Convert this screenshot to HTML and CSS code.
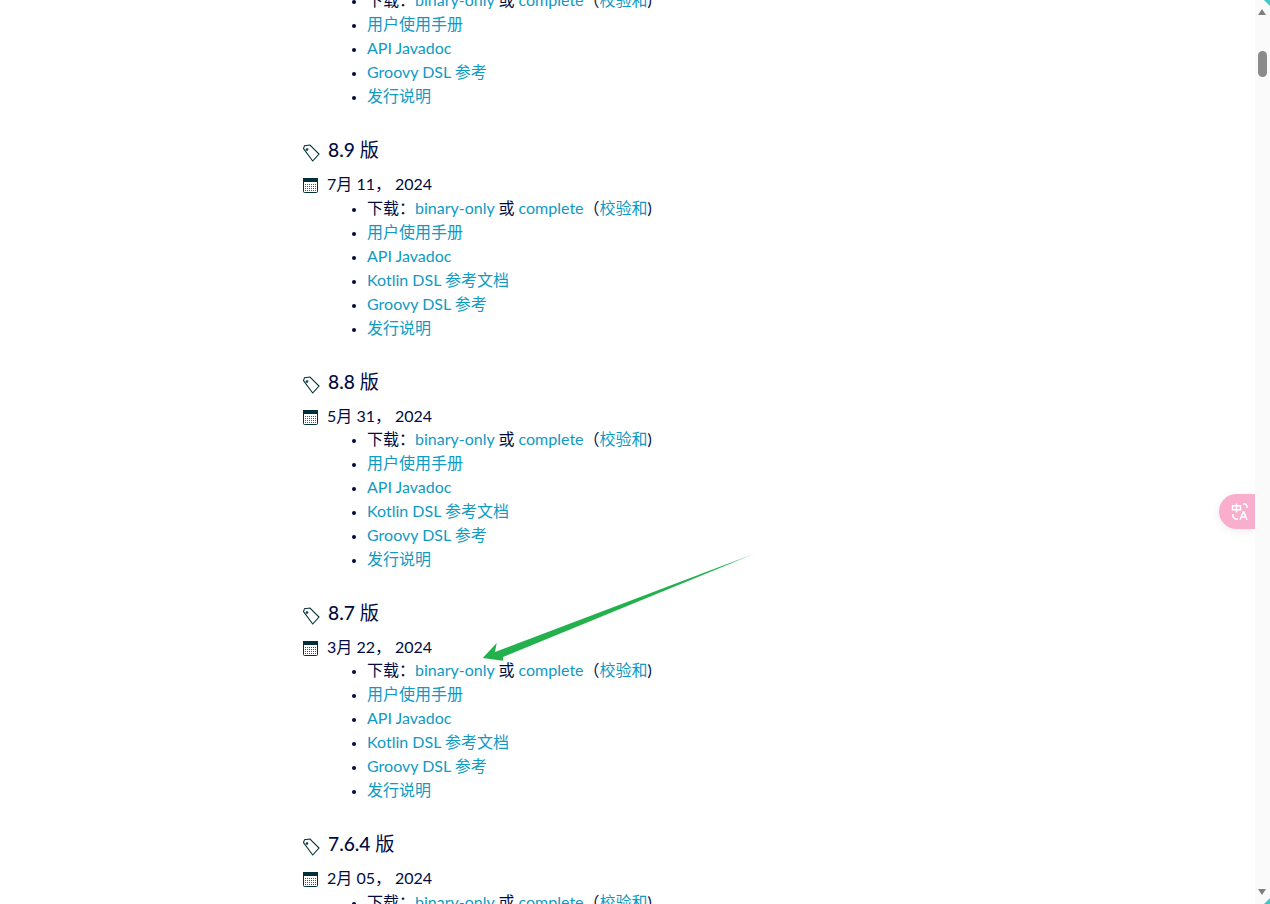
FILE: index.html
```html
<!DOCTYPE html>
<html lang="zh-CN">
  <head>
    <meta http-equiv="Content-Type" content="text/html;charset=UTF-8" />
    <title>Gradle 发行版</title>
    <link rel="stylesheet" href="styles.css">
  </head>
  <body>
    <main class="releases">
      <section class="release release-first">
        <ul class="links">
          <li>下载：<a href="#">binary-only</a> 或 <a href="#">complete</a>（<a href="#">校验和</a>)</li>
          <li><a href="#">用户使用手册</a></li>
          <li><a href="#">API Javadoc</a></li>
          <li><a href="#">Groovy DSL 参考</a></li>
          <li><a href="#">发行说明</a></li>
        </ul>
      </section>

      <section class="release">
        <h3 class="version">
          <svg class="tag" viewBox="0 0 18 18"><path d="M1.500 4.700L2.500 1.700 8 1l9 9-6.300 7z" /><circle cx="5" cy="5.500" r="0.800" /></svg>
          <span>8.9 <span class="version-suffix">版</span></span>
        </h3>
        <div class="date">
          <svg class="cal" viewBox="0 0 15 15"><rect x="0.500" y="0.500" width="14" height="14" rx="1" /><rect class="cal-top" x="0.500" y="0.500" width="14" height="3" /><path class="cal-grid" d="M2 6.500h11M2 8.500h11M2 10.500h11M2 12.500h11" /></svg>
          <span>7月 11， 2024</span>
        </div>
        <ul class="links">
          <li>下载：<a href="#">binary-only</a> 或 <a href="#">complete</a>（<a href="#">校验和</a>)</li>
          <li><a href="#">用户使用手册</a></li>
          <li><a href="#">API Javadoc</a></li>
          <li><a href="#">Kotlin DSL 参考文档</a></li>
          <li><a href="#">Groovy DSL 参考</a></li>
          <li><a href="#">发行说明</a></li>
        </ul>
      </section>

      <section class="release">
        <h3 class="version">
          <svg class="tag" viewBox="0 0 18 18"><path d="M1.500 4.700L2.500 1.700 8 1l9 9-6.300 7z" /><circle cx="5" cy="5.500" r="0.800" /></svg>
          <span>8.8 <span class="version-suffix">版</span></span>
        </h3>
        <div class="date">
          <svg class="cal" viewBox="0 0 15 15"><rect x="0.500" y="0.500" width="14" height="14" rx="1" /><rect class="cal-top" x="0.500" y="0.500" width="14" height="3" /><path class="cal-grid" d="M2 6.500h11M2 8.500h11M2 10.500h11M2 12.500h11" /></svg>
          <span>5月 31， 2024</span>
        </div>
        <ul class="links">
          <li>下载：<a href="#">binary-only</a> 或 <a href="#">complete</a>（<a href="#">校验和</a>)</li>
          <li><a href="#">用户使用手册</a></li>
          <li><a href="#">API Javadoc</a></li>
          <li><a href="#">Kotlin DSL 参考文档</a></li>
          <li><a href="#">Groovy DSL 参考</a></li>
          <li><a href="#">发行说明</a></li>
        </ul>
      </section>

      <section class="release">
        <h3 class="version">
          <svg class="tag" viewBox="0 0 18 18"><path d="M1.500 4.700L2.500 1.700 8 1l9 9-6.300 7z" /><circle cx="5" cy="5.500" r="0.800" /></svg>
          <span>8.7 <span class="version-suffix">版</span></span>
        </h3>
        <div class="date">
          <svg class="cal" viewBox="0 0 15 15"><rect x="0.500" y="0.500" width="14" height="14" rx="1" /><rect class="cal-top" x="0.500" y="0.500" width="14" height="3" /><path class="cal-grid" d="M2 6.500h11M2 8.500h11M2 10.500h11M2 12.500h11" /></svg>
          <span>3月 22， 2024</span>
        </div>
        <ul class="links">
          <li>下载：<a href="#">binary-only</a> 或 <a href="#">complete</a>（<a href="#">校验和</a>)</li>
          <li><a href="#">用户使用手册</a></li>
          <li><a href="#">API Javadoc</a></li>
          <li><a href="#">Kotlin DSL 参考文档</a></li>
          <li><a href="#">Groovy DSL 参考</a></li>
          <li><a href="#">发行说明</a></li>
        </ul>
      </section>

      <section class="release">
        <h3 class="version">
          <svg class="tag" viewBox="0 0 18 18"><path d="M1.500 4.700L2.500 1.700 8 1l9 9-6.300 7z" /><circle cx="5" cy="5.500" r="0.800" /></svg>
          <span>7.6.4 <span class="version-suffix">版</span></span>
        </h3>
        <div class="date">
          <svg class="cal" viewBox="0 0 15 15"><rect x="0.500" y="0.500" width="14" height="14" rx="1" /><rect class="cal-top" x="0.500" y="0.500" width="14" height="3" /><path class="cal-grid" d="M2 6.500h11M2 8.500h11M2 10.500h11M2 12.500h11" /></svg>
          <span>2月 05， 2024</span>
        </div>
        <ul class="links">
          <li>下载：<a href="#">binary-only</a> 或 <a href="#">complete</a>（<a href="#">校验和</a>)</li>
        </ul>
      </section>
    </main>

    <!-- annotation arrow drawn over the page -->
    <svg class="arrow" viewBox="0 0 300 120" width="300" height="120">
      <defs>
        <linearGradient id="arrowFade" x1="0" y1="1" x2="1" y2="0">
          <stop offset="0.900" stop-color="#22b14c" />
          <stop offset="1" stop-color="#22b14c" stop-opacity="0.200" />
        </linearGradient>
      </defs>
      <path fill="url(#arrowFade)" d="M287.500 10.500 L25 110 L26.700 101 L12.700 116 L33 118.700 L33 115 Z" />
    </svg>

    <div class="translate-btn">
      <svg viewBox="0 0 20 20" width="20" height="20"><path d="M6.500 1.500v9M2.500 3.800h8v4h-8zM13 2h2.500l1.500 2v2M3 12v3l2 2h3M13.500 9l-3.500 9M13.500 9l3.500 9M11.300 15h4.500" /></svg>
    </div>

    <div class="scrollbar">
      <span class="scroll-up"></span>
      <span class="scroll-thumb"></span>
      <span class="scroll-down"></span>
    </div>
    <span class="corner corner-top"></span>
    <span class="corner corner-bottom"></span>
  </body>
</html>
```

FILE: styles.css
```css
html, body { margin: 0; padding: 0; height: 100%; overflow: hidden; background: #fff; }
body { font-family: Lato, "Noto Sans CJK SC", sans-serif; font-size: 16px; line-height: 24px; color: #010b3f; }

/* page is photographed scrolled down, so the first entry is cut off */
.releases { width: 660px; margin: -12px 0 0 303px; }
.release { height: 231.2px; padding-top: 0.4px; box-sizing: border-box; }
.release-first { height: 149px; padding-top: 0; }

.version { display: flex; align-items: center; gap: 8px; margin: 0; height: 26px; font-size: 19.2px; font-weight: 500; line-height: 26px; color: #010b3f; }
.version-suffix { font-weight: 400; }
.tag { width: 18px; height: 18px; margin: 6px 0 0 -1px; flex: none; fill: none; stroke: #02303a; stroke-width: 1.1; }

.date { display: flex; align-items: center; gap: 9px; height: 24px; margin-top: 9px; }
.cal { width: 15px; height: 15px; margin-top: 3px; flex: none; fill: none; stroke: #02303a; stroke-width: 1; }
.cal-top { fill: #02303a; }
.cal-grid { stroke-dasharray: 1 1; stroke: #3a5560; }

.links { margin: -0.4px 0 0; padding: 0 0 0 64px; }
.release-first .links { margin-top: 0; }
.links li { height: 24px; }
.links li::marker { font-size: 13px; color: #010b3f; }
.links a { color: #0f9ac4; text-decoration: none; }

.arrow { position: fixed; left: 470px; top: 542px; }

.translate-btn { position: fixed; right: 15px; top: 494px; width: 36px; height: 35px; padding-left: 6px; box-sizing: border-box; display: flex; align-items: center; justify-content: center; background: #f9aecd; border-radius: 18px 0 0 18px; box-shadow: 0 2px 8px rgba(0,0,0,0.08); }
.translate-btn svg { fill: none; stroke: #fff; stroke-width: 1.5; }

.scrollbar { position: fixed; right: 0; top: 0; bottom: 0; width: 15px; background: #fafafa; }
.scroll-thumb { position: absolute; left: 3px; top: 51px; width: 9px; height: 26px; background: #8b8b8b; border-radius: 5px; }
.scroll-up { position: absolute; left: 3px; top: 9px; border: 4.500px solid transparent; border-top: 0; border-bottom: 6px solid #7f7f7f; }
.scroll-down { position: absolute; left: 3px; bottom: 9px; border: 4.500px solid transparent; border-bottom: 0; border-top: 6px solid #7f7f7f; }

/* teal slivers of the screenshot frame in the right corners */
.corner { position: fixed; right: 0; width: 6px; height: 6px; background: #3fc8c8; }
.corner-top { top: 0; clip-path: polygon(0 0, 100% 0, 100% 100%); }
.corner-bottom { bottom: 0; clip-path: polygon(100% 0, 100% 100%, 0 100%); }
```
